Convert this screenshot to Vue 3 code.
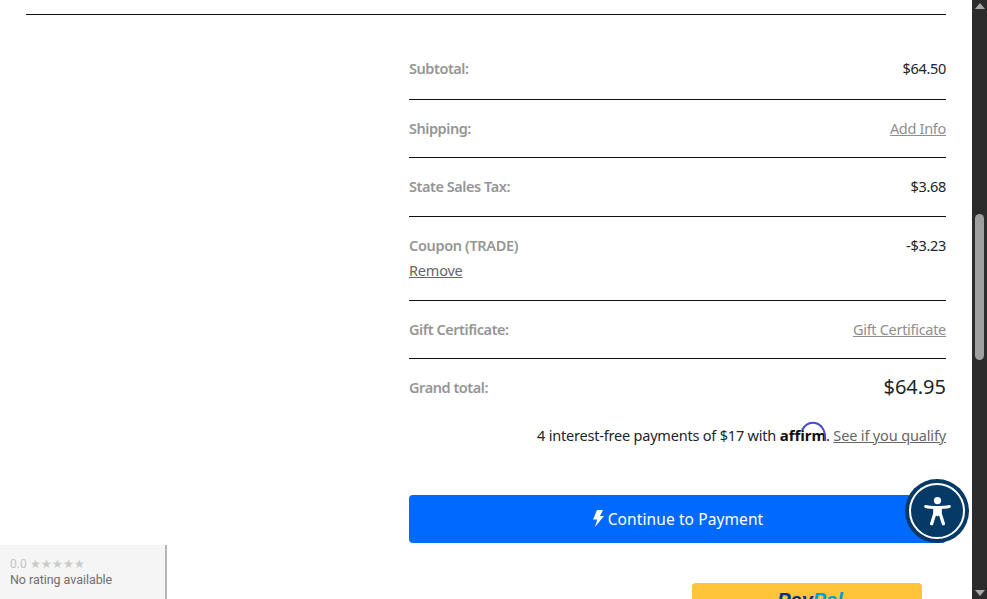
<template>
  <div class="page">
    <main class="content">
      <div class="top-rule"></div>

      <section class="summary">
        <div v-for="row in rows" :key="row.label" class="row" :class="{ 'row-tall': row.remove }">
          <div class="row-label">
            <span class="label" :class="{ 'label-light': row.light }">{{ row.label }}</span>
            <a v-if="row.remove" class="remove">Remove</a>
          </div>
          <a v-if="row.link" class="link">{{ row.value }}</a>
          <span v-else class="value">{{ row.value }}</span>
        </div>

        <div class="row row-total">
          <span class="label">Grand total:</span>
          <span class="total">$64.95</span>
        </div>

        <p class="affirm">
          4 interest-free payments of $17 with
          <span class="affirm-logo">
            <b>affirm</b>
            <svg class="affirm-arc" viewBox="0 0 30 22">
              <path d="M4 9 C8 2 14 1 19 2.5 C25 5 28 12 27 20" fill="none" stroke="#4a4ac4" stroke-width="2" />
            </svg>
          </span>.
          <a class="link qualify">See if you qualify</a>
        </p>

        <button class="pay-button">
          <svg class="bolt" viewBox="0 0 12 17">
            <path d="M5 0 H11 L8 6 H12 L3 17 L5.2 9.5 H1 Z" fill="#fff" />
          </svg>
          Continue to Payment
        </button>

        <div class="paypal-wrap">
          <button class="paypal"><b class="pp-dark">Pay</b><b class="pp-light">Pal</b></button>
        </div>
      </section>
    </main>

    <aside class="scrollbar">
      <span class="arrow arrow-up"></span>
      <div class="track"><div class="thumb"></div></div>
      <span class="arrow arrow-down"></span>
    </aside>

    <!-- floating widgets -->
    <button class="a11y" aria-label="Accessibility">
      <span class="a11y-ring">
        <svg viewBox="0 0 32 32" width="29" height="32">
          <circle cx="16" cy="4.5" r="4" fill="#fff" />
          <path d="M3 11 C9 12.5 23 12.5 29 11" fill="none" stroke="#fff" stroke-width="3.4" stroke-linecap="round" />
          <path d="M13 12 V19 L9.5 30 M19 12 V19 L22.5 30" fill="none" stroke="#fff" stroke-width="3.6" stroke-linecap="round" />
          <path d="M12.5 11.5 H19.5 V19.5 L16 22 L12.5 19.5 Z" fill="#fff" />
        </svg>
      </span>
    </button>

    <div class="rating">
      <div class="rating-top">0.0 <span class="stars">★★★★★</span></div>
      <div class="rating-text">No rating available</div>
    </div>
  </div>
</template>

<script setup>
const rows = [
  { label: 'Subtotal:', value: '$64.50' },
  { label: 'Shipping:', value: 'Add Info', link: true },
  { label: 'State Sales Tax:', value: '$3.68' },
  { label: 'Coupon (TRADE)', value: '-$3.23', remove: true, light: true },
  { label: 'Gift Certificate:', value: 'Gift Certificate', link: true },
]
</script>

<style>
html, body { margin: 0; overflow: hidden; background: #fff; }
</style>

<style scoped>
.page {
  position: relative;
  display: flex;
  width: 987px;
  height: 599px;
  overflow: hidden;
  background: #fff;
  font-family: "Noto Sans", "Open Sans", sans-serif;
  color: #212529;
}

.content {
  flex: 1;
  min-width: 0;
  padding: 14px 26px 0;
}
.top-rule { height: 1px; background: #111; }

.summary {
  margin: 25px 0 0 auto;
  width: 537px;
}

.row {
  display: flex;
  justify-content: space-between;
  align-items: flex-start;
  height: 59px;
  box-sizing: border-box;
  padding-top: 17px;
  border-bottom: 1px solid #111;
  font-size: 14.5px;
  line-height: 22px;
}
.row:nth-child(2) { height: 58px; }
.row:nth-child(5) { height: 58px; }
.row-tall { height: 84px; }
.row:first-child { height: 60px; }

.row-label { display: flex; flex-direction: column; gap: 3px; }
.label { color: #969696; font-weight: 600; letter-spacing: -0.45px; }
.label-light { letter-spacing: -0.35px; }
.remove { color: #666; text-decoration: underline; letter-spacing: -0.2px; }
.value { color: #212529; letter-spacing: -0.3px; }
.link { color: #8f8f8f; text-decoration: underline; letter-spacing: -0.3px; }

.row-total {
  border-bottom: 0;
  align-items: center;
  height: 56px;
  padding-top: 0;
}
.total { font-size: 20px; color: #212529; }

.affirm {
  margin: 9px 0 0;
  text-align: right;
  font-size: 14.5px;
  line-height: 22px;
  letter-spacing: -0.2px;
  color: #212529;
}
.affirm-logo { position: relative; display: inline-block; }
.affirm-logo b { font-weight: 700; color: #111; font-size: 15px; letter-spacing: 0; }
.affirm-arc {
  position: absolute;
  right: -2px;
  top: -3px;
  width: 30px;
  height: 22px;
}
.qualify { color: #666; letter-spacing: -0.15px; }

.pay-button {
  display: flex;
  align-items: center;
  justify-content: center;
  gap: 4px;
  width: 100%;
  height: 48px;
  margin-top: 49px;
  border: 0;
  border-radius: 4px;
  background: #0069ff;
  color: #fff;
  font-family: "Noto Sans", sans-serif;
  font-size: 15.5px;
  letter-spacing: 0.1px;
}
.bolt { width: 12px; height: 17px; margin-bottom: 1px; }

.paypal-wrap {
  display: flex;
  justify-content: flex-end;
  padding-right: 24px;
  margin-top: 40px;
}
.paypal {
  display: flex;
  justify-content: center;
  align-items: flex-start;
  flex: none;
  width: 230px;
  height: 44px;
  border: 0;
  border-radius: 4px;
  background: #ffc439;
  padding: 5px 0 0 6px;
  font-family: "Liberation Sans", sans-serif;
  font-style: italic;
  font-size: 20px;
  line-height: 24px;
}
.pp-dark { color: #003087; }
.pp-light { color: #009cde; }

.scrollbar {
  flex: none;
  display: flex;
  flex-direction: column;
  align-items: center;
  width: 15px;
  background: #2c2c2c;
}
.arrow { flex: none; width: 0; height: 0; border-left: 5px solid transparent; border-right: 5px solid transparent; }
.arrow-up { margin-top: 3px; border-bottom: 6px solid #a8a8a8; }
.arrow-down { margin-bottom: 3px; border-top: 6px solid #a8a8a8; }
.track { flex: 1; width: 100%; position: relative; }
.thumb {
  position: absolute;
  left: 3px;
  top: 205px;
  width: 9px;
  height: 146px;
  border-radius: 5px;
  background: #9f9f9f;
}

.a11y {
  position: absolute;
  left: 905px;
  top: 479px;
  display: flex;
  align-items: center;
  justify-content: center;
  width: 64px;
  height: 64px;
  padding: 0;
  border: 0;
  border-radius: 50%;
  background: #063a66;
}
.a11y-ring {
  display: flex;
  align-items: center;
  justify-content: center;
  width: 56px;
  height: 56px;
  box-sizing: border-box;
  border: 2px solid #fff;
  border-radius: 50%;
}

.rating {
  position: absolute;
  left: 0;
  bottom: 0;
  width: 167px;
  height: 54px;
  box-sizing: border-box;
  padding: 12px 0 0 10px;
  background: #f5f5f5;
  border-right: 2px solid #b5b5b5;
  font-family: Roboto, sans-serif;
}
.rating-top { font-size: 12px; line-height: 14px; color: #c4c4c4; }
.stars { font-size: 11.5px; color: #c9c9c9; }
.rating-text { font-size: 12.5px; line-height: 16px; margin-top: 1px; color: #6f6f6f; letter-spacing: -0.05px; }
</style>
